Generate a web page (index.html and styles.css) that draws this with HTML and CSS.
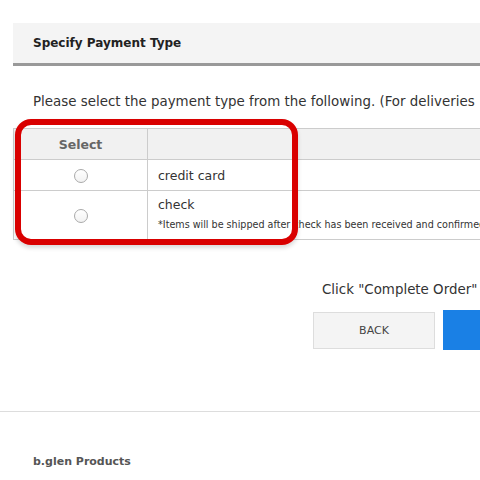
FILE: index.html
```html
<!DOCTYPE html>
<html lang="en">
<head>
    <meta charset="UTF-8">
    <meta name="viewport" content="width=device-width, initial-scale=1.0">
    <title>Specify Payment Type</title>
    <link rel="stylesheet" href="styles.css">
</head>
<body>

<div class="page">
    <h2 class="section-title">Specify Payment Type</h2>
    <p class="lead">Please select the payment type from the following. (For deliveries</p>

    <div class="payment-wrap">
        <table class="payment-table">
            <tr>
                <th class="col-select">Select</th>
                <th></th>
            </tr>
            <tr>
                <td class="col-select"><input type="radio" name="pay" class="radio"></td>
                <td class="pay-name">credit card</td>
            </tr>
            <tr class="tall">
                <td class="col-select"><input type="radio" name="pay" class="radio"></td>
                <td class="pay-name">check<span class="note">*Items will be shipped after check has been received and confirmed</span></td>
            </tr>
        </table>
        <div class="highlight"></div>
    </div>

    <div class="order-actions">
        <p class="hint">Click "Complete Order"</p>
        <div class="buttons">
            <button class="btn btn-back">BACK</button>
            <button class="btn btn-complete" aria-label="Complete Order"></button>
        </div>
    </div>
</div>

<footer class="footer">
    <div class="footer-title">b.glen Products</div>
</footer>

</body>
</html>
```

FILE: styles.css
```css
html, body {
    margin: 0;
    overflow: hidden;
}
body {
    font-family: 'DejaVu Sans', Verdana, sans-serif;
    color: #333;
    background-color: #fff;
    width: 480px;
    height: 480px;
}
.page {
    padding: 23px 0 0 13px;
    width: 700px;
}
.section-title {
    margin: 0;
    height: 40px;
    line-height: 40px;
    padding-left: 20px;
    background-color: #f4f4f4;
    border-bottom: 3px solid #999;
    font-size: 12px;
    font-weight: bold;
    color: #222;
}
.lead {
    margin: 0;
    padding: 26px 0 0 20px;
    height: 36px;
    font-size: 13.4px;
    line-height: 20px;
    white-space: nowrap;
}
.payment-wrap {
    position: relative;
}
.payment-table {
    border-collapse: collapse;
    width: 640px;
    font-size: 12.5px;
}
.payment-table th, .payment-table td {
    border: 1px solid #ccc;
    padding: 0 10px;
    text-align: left;
}
.payment-table th {
    background-color: #f1f1f1;
    height: 30px;
    color: #666;
    font-size: 12.5px;
}
.payment-table td {
    height: 30px;
}
.payment-table .tall td {
    height: 44px;
}
.payment-table .col-select {
    width: 113px;
    text-align: center;
}
.tall .pay-name {
    padding-bottom: 4px;
}
.note {
    display: block;
    font-size: 9.6px;
    margin-top: 7px;
    white-space: nowrap;
}
.radio {
    appearance: none;
    width: 14px;
    height: 14px;
    margin: 0;
    border: 1px solid #aaa;
    border-radius: 50%;
    background: linear-gradient(#fff, #f2f2f2);
    vertical-align: middle;
}
.highlight {
    position: absolute;
    left: 2px;
    top: -9px;
    width: 271px;
    height: 114px;
    border: 6px solid #d90000;
    border-radius: 16px;
    box-shadow: 0 3px 4px rgba(0, 0, 0, 0.15);
}
.order-actions {
    padding: 38px 0 0 300px;
}
.hint {
    margin: 0 0 0 9px;
    font-size: 13.4px;
    line-height: 24px;
    white-space: nowrap;
}
.buttons {
    display: flex;
    align-items: center;
    gap: 8px;
    margin-top: 8px;
}
.btn {
    font-family: inherit;
    border-radius: 0;
    cursor: pointer;
}
.btn-back {
    width: 122px;
    height: 37px;
    background-color: #f4f4f4;
    border: 1px solid #ddd;
    color: #444;
    font-size: 11px;
}
.btn-complete {
    width: 200px;
    height: 40px;
    background-color: #1a80e5;
    border: none;
    color: #fff;
    font-size: 12px;
}
.footer {
    margin-top: 61px;
    border-top: 1px solid #ddd;
    padding: 43px 0 0 33px;
}
.footer-title {
    font-size: 11px;
    font-weight: bold;
    color: #555;
}
```
